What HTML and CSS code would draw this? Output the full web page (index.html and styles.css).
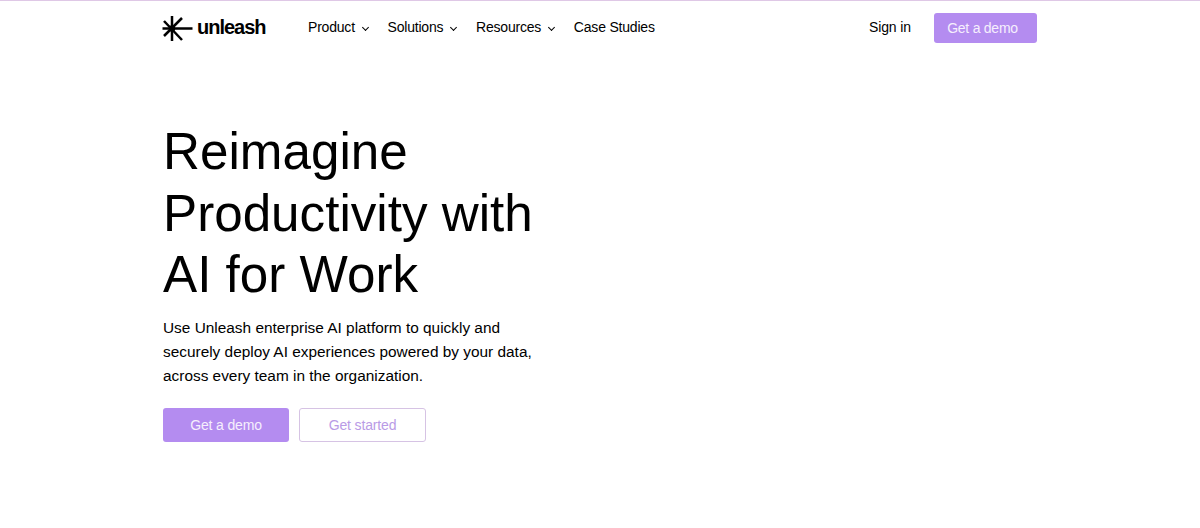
FILE: index.html
```html
<!DOCTYPE html>
<html lang="en">
<head>
  <meta charset="UTF-8" />
  <meta name="viewport" content="width=device-width, initial-scale=1.0" />
  <title>Unleash</title>
  <link rel="stylesheet" href="styles.css">
</head>
<body>
  <header class="topbar">
    <div class="nav-left">
      <a class="logo" href="#">
        <svg class="logo-mark" width="31" height="27" viewBox="0 0 31 27" aria-hidden="true">
          <g stroke="#000" stroke-width="2.5" fill="none">
            <path d="M10 1V26" />
            <path d="M0.5 13.5H30.5" />
            <path d="M2 6L20 25" />
            <path d="M20 3L2 21" />
          </g>
          <circle cx="10" cy="13.5" r="3.2" fill="#000" />
        </svg>
        <span class="logo-text">unleash</span>
      </a>
      <nav class="nav-links">
        <a href="#">Product <span class="chev"></span></a>
        <a href="#">Solutions <span class="chev"></span></a>
        <a href="#">Resources <span class="chev"></span></a>
        <a href="#">Case Studies</a>
      </nav>
    </div>
    <div class="nav-right">
      <a class="sign-in" href="#">Sign in</a>
      <a class="btn btn-fill btn-small" href="#">Get a demo</a>
    </div>
  </header>

  <main class="hero">
    <h1>Reimagine Productivity with AI for Work</h1>
    <p>Use Unleash enterprise AI platform to quickly and securely deploy AI experiences powered by your data, across every team in the organization.</p>
    <div class="hero-buttons">
      <a class="btn btn-fill" href="#">Get a demo</a>
      <a class="btn btn-line" href="#">Get started</a>
    </div>
  </main>
</body>
</html>
```

FILE: styles.css
```css
body {
  margin: 0;
  font-family: 'Liberation Sans', Arial, sans-serif;
  background-color: #ffffff;
  color: #000000;
}

a {
  color: inherit;
  text-decoration: none;
}

.topbar {
  display: flex;
  justify-content: space-between;
  align-items: center;
  height: 54px;
  padding: 0 163px 0 162px;
  border-top: 1px solid #dfc8e6;
  box-sizing: border-box;
}

.nav-left {
  display: flex;
  align-items: center;
}

.logo {
  display: flex;
  align-items: center;
  gap: 4px;
  width: 146px;
}

.logo-mark {
  margin-top: 2px;
}

.logo-text {
  padding-bottom: 2px;
  font-size: 20px;
  font-weight: 700;
  letter-spacing: -1px;
  line-height: 24px;
}

.nav-links {
  display: flex;
  gap: 18px;
  padding-bottom: 2px;
  font-size: 14px;
  letter-spacing: -0.2px;
}

.chev {
  display: inline-block;
  width: 4px;
  height: 4px;
  margin: 0 2px 2px 4px;
  border-right: 1px solid #000;
  border-bottom: 1px solid #000;
  transform: rotate(45deg);
}

.nav-right {
  display: flex;
  align-items: center;
  gap: 23px;
  font-size: 14px;
}

.sign-in {
  padding-bottom: 2px;
  letter-spacing: -0.1px;
}

.btn {
  display: flex;
  justify-content: center;
  align-items: center;
  box-sizing: border-box;
  width: 126px;
  height: 34px;
  border-radius: 3px;
  font-size: 14px;
  letter-spacing: -0.15px;
}

.btn-fill {
  background-color: #b48cf0;
  color: #f6effd;
}

.btn-small {
  width: 103px;
  height: 30px;
  padding-right: 6px;
  letter-spacing: -0.25px;
}

.btn-line {
  width: 127px;
  background-color: #ffffff;
  border: 1px solid #d6c3e4;
  color: #b99be6;
}

.hero {
  padding: 67px 0 0 163px;
}

h1 {
  width: 400px;
  margin: 0;
  font-size: 51.2px;
  font-weight: 400;
  line-height: 61.5px;
}

p {
  width: 380px;
  margin: 10px 0 0;
  font-size: 15.4px;
  line-height: 24px;
}

.hero-buttons {
  display: flex;
  gap: 10px;
  margin-top: 20px;
}
```
